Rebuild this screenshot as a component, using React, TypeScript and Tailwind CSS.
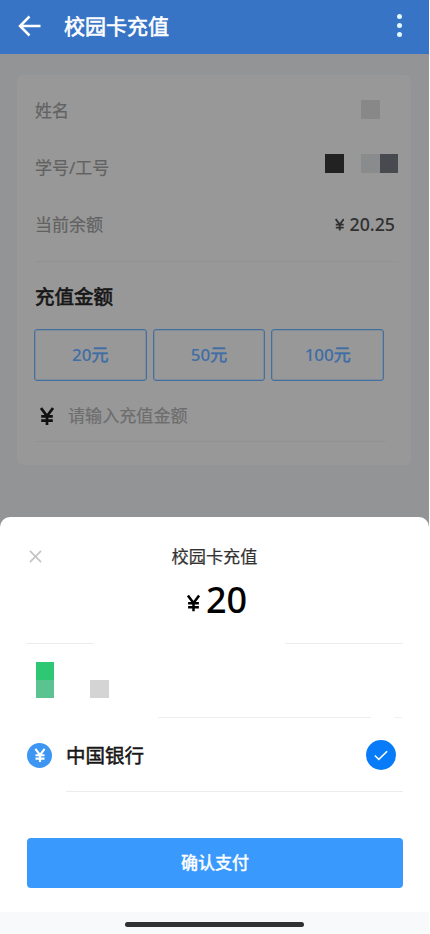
import type { ReactNode } from 'react';

function InfoRow({ label, children }: { label: string; children: ReactNode }) {
  return (
    <div className="flex h-[57px] items-center justify-between">
      <span className="text-[17px] text-[#626262] [-webkit-text-stroke:0.2px_#626262]">{label}</span>
      {children}
    </div>
  );
}

function Yen({ className }: { className: string }) {
  return (
    <svg viewBox="0 0 14 18" className={className} fill="none" stroke="currentColor" strokeWidth="2.7">
      <path d="M1 1 L7 9 L13 1 M7 8.5 V18 M1.2 9.3 H12.8 M1.2 13.6 H12.8" />
    </svg>
  );
}

const amounts = ['20', '50', '100'];

export default function App() {
  return (
    <div className="h-[934px] w-[430px] overflow-hidden bg-white font-['Noto_Sans','Noto_Sans_CJK_SC',sans-serif]">
      <div className="flex h-full w-[429px] flex-col bg-[#939496]">
        <header className="flex h-[54px] shrink-0 items-center bg-[#3774c5] pb-[3px] text-white">
          <svg viewBox="0 0 24 22" className="ml-[18px] h-[22px] w-6" fill="none" stroke="currentColor" strokeWidth="2.5">
            <path d="M11.5 1.5 L2 11 L11.5 20.5 M2 11 H22.5" />
          </svg>
          <h1 className="mt-[2px] ml-[22px] text-[21px] leading-none [-webkit-text-stroke:0.6px_white]">校园卡充值</h1>
          <div className="mr-[27px] ml-auto flex flex-col gap-[4px]">
            <i className="size-[5.3px] rounded-full bg-[#e2faff]" />
            <i className="size-[5.3px] rounded-full bg-[#e2faff]" />
            <i className="size-[5.3px] rounded-full bg-[#e2faff]" />
          </div>
        </header>

        <main className="mt-[21px] ml-[17px] h-[390px] w-[394px] shrink-0 rounded-md bg-[#989898] pl-[18px]">
          <div className="w-[363px] border-b border-[#929292] pt-[7px] pb-[8px]">
            <InfoRow label="姓名">
              <i className="mr-[18px] mb-[2px] size-[19px] bg-[#888888]" />
            </InfoRow>
            <InfoRow label="学号/工号">
              <div className="mb-[8px] flex">
                <i className="mr-[17px] size-[19px] bg-[#222222]" />
                <i className="size-[19px] bg-[#8a8b8c]" />
                <i className="h-[19px] w-[18px] bg-[#474b4f]" />
              </div>
            </InfoRow>
            <InfoRow label="当前余额">
              <span className="mr-[3px] flex items-center text-[17.8px] font-medium text-[#303030]">
                <Yen className="mr-[5px] h-[13px] w-[9.5px]" />
                20.25
              </span>
            </InfoRow>
          </div>
          <h2 className="mt-[25px] text-[19.5px] leading-[20px] text-[#171717] [-webkit-text-stroke:0.7px_#171717]">充值金额</h2>
          <div className="mt-[22px] -ml-px flex gap-[6px]">
            {amounts.map((amount) => (
              <button key={amount} className="h-[52px] w-[112.7px] rounded-[3px] border border-[#44709f] text-[17px] font-medium text-[#3f6da5] shadow-[inset_0_0_0_1px_#7f8c99]">
                {amount}<span className="font-normal [-webkit-text-stroke:0.5px_#3f6da5]">元</span>
              </button>
            ))}
          </div>
          <div className="flex h-[61px] w-[351px] items-center border-b border-[#929292] pt-[9px]">
            <Yen className="mr-[14px] ml-[5px] h-[18px] w-[14px] text-[#111111]" />
            <span className="text-[17.1px] text-[#6d6d6d] [-webkit-text-stroke:0.2px_#6d6d6d]">请输入充值金额</span>
          </div>
        </main>

        <section className="mt-[52px] flex h-[417px] shrink-0 flex-col rounded-t-[10px] bg-white">
          <div className="grid h-[78px] shrink-0 grid-cols-3 items-center px-[27px]">
            <svg viewBox="0 0 14 14" className="ml-[2px] size-[13px]" fill="none" stroke="#c4c4c4" strokeWidth="1.8">
              <path d="M1 1 L13 13 M13 1 L1 13" />
            </svg>
            <h3 className="mt-[2px] text-center text-[17.2px] whitespace-nowrap text-[#333333] [-webkit-text-stroke:0.2px_#333333]">校园卡充值</h3>
          </div>
          <div className="flex h-[48px] shrink-0 justify-center gap-[6px] pl-[5px] text-black">
            <Yen className="mt-[-1px] h-[18px] w-[13px]" />
            <strong className="text-[36px] leading-[10px] font-medium">20</strong>
          </div>
          <div className="flex h-px shrink-0 justify-between px-[26px]">
            <i className="w-[68px] bg-[#ededed]" />
            <i className="w-[118px] bg-[#ededed]" />
          </div>
          <div className="flex h-[73px] shrink-0 pt-[18px] pl-[36px]">
            <div className="w-[18px]">
              <i className="block h-[18px] bg-[#2ec774]" />
              <i className="block h-[18px] bg-[#5bc38f]" />
            </div>
            <i className="mt-[18px] ml-[36px] h-[18px] w-[19px] bg-[#d4d4d4]" />
          </div>
          <div className="flex h-px shrink-0 pl-[158px]">
            <i className="w-[213px] bg-[#ededed]" />
            <i className="ml-[23px] w-[8px] bg-[#f2f2f2]" />
          </div>
          <div className="flex h-[73px] shrink-0 items-center pt-px pl-[27px]">
            <span className="flex size-[25px] items-center justify-center rounded-full bg-[#3d96f2] text-white">
              <Yen className="h-[14px] w-[12px]" />
            </span>
            <span className="mt-px ml-[14px] text-[19.5px] text-[#171717] [-webkit-text-stroke:0.5px_#171717]">中国银行</span>
            <span className="mr-[33px] ml-auto flex size-[30px] items-center justify-center rounded-full bg-[#087cf8]">
              <svg viewBox="0 0 16 12" className="h-[11px] w-[14px]" fill="none" stroke="white" strokeWidth="1.8">
                <path d="M1 6 L5.5 10.5 L15 1.2" />
              </svg>
            </span>
          </div>
          <div className="ml-[66px] h-px w-[337px] shrink-0 bg-[#ececec]" />
          <button className="mt-[46px] ml-[27px] h-[50px] w-[376px] shrink-0 rounded-[4px] bg-[#3a99fd] text-[17px] text-white [-webkit-text-stroke:0.5px_white]">确认支付</button>
          <div className="mt-auto flex h-[22px] justify-center bg-[#f8f9fb] pt-[9.5px]">
            <i className="h-[5px] w-[179px] rounded-full bg-[#303133]" />
          </div>
        </section>
      </div>
    </div>
  );
}
